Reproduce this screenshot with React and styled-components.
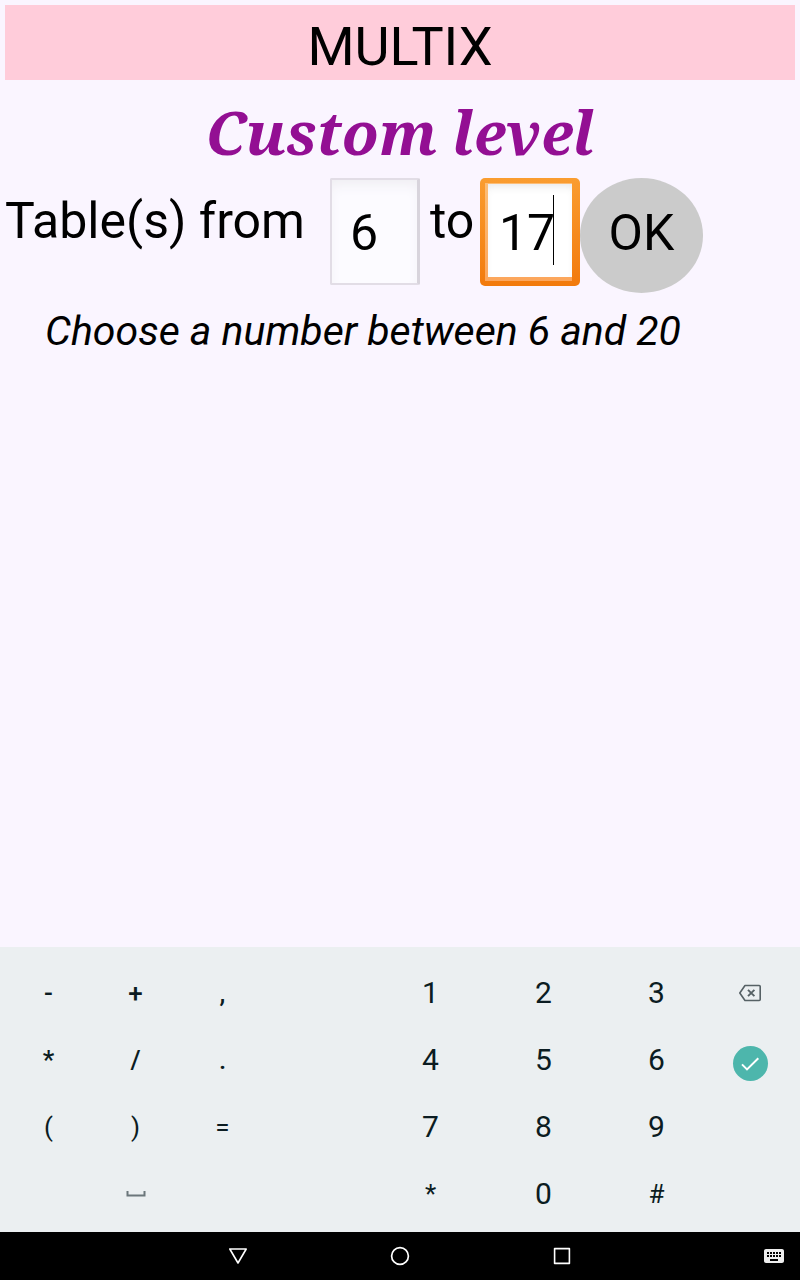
import { useState } from "react";
import styled, { createGlobalStyle } from "styled-components";

const KEY_ROWS = [
  ["-", "+", ",", null, "1", "2", "3", "delete"],
  ["*", "/", ".", null, "4", "5", "6", "done"],
  ["(", ")", "=", null, "7", "8", "9", null],
  [null, "space", null, null, "*", "0", "#", null],
];

export default function App() {
  const [from, setFrom] = useState("6");
  const [to, setTo] = useState("17");

  function handleKey(key) {
    if (key === "delete") setTo(to.slice(0, -1));
    else if (/^\d$/.test(key)) setTo(to + key);
  }

  return (
    <Screen>
      <GlobalStyle />
      <Main>
        <AppName>MULTIX</AppName>
        <Title>Custom level</Title>
        <LevelForm onSubmit={(event) => event.preventDefault()}>
          <FromLabel htmlFor="from">Table(s) from</FromLabel>
          <NumberInput
            id="from"
            inputMode="numeric"
            value={from}
            onChange={(event) => setFrom(event.target.value)}
          />
          <ToLabel htmlFor="to">to</ToLabel>
          <ActiveField>
            <ActiveInput
              id="to"
              inputMode="numeric"
              value={to}
              onChange={(event) => setTo(event.target.value)}
            />
            <Caret />
          </ActiveField>
          <OkButton type="submit">OK</OkButton>
        </LevelForm>
        <Hint>Choose a number between 6 and 20</Hint>
      </Main>

      <Keyboard>
        {KEY_ROWS.map((row, rowIndex) =>
          row.map((key, index) => {
            const id = `${rowIndex}-${index}`;
            if (!key) return <span key={id} />;
            return (
              <Key
                key={id}
                type="button"
                aria-label={key}
                $digit={/^\d$/.test(key)}
                $bold={index < 3 && rowIndex < 2}
                onClick={() => handleKey(key)}
              >
                <KeyFace name={key} />
              </Key>
            );
          })
        )}
      </Keyboard>

      <NavBar>
        <NavButton type="button" aria-label="Back">
          <svg width="24" height="24" fill="none" stroke="#fff" strokeWidth="1.6" strokeLinejoin="round">
            <path d="M3.8 5h16.4L12 19z" />
          </svg>
        </NavButton>
        <NavButton type="button" aria-label="Home">
          <svg width="24" height="24" fill="none" stroke="#fff" strokeWidth="1.7">
            <circle cx="12" cy="12" r="8.4" />
          </svg>
        </NavButton>
        <NavButton type="button" aria-label="Recent apps">
          <svg width="24" height="24" fill="none" stroke="#fff" strokeWidth="1.6" strokeLinejoin="round">
            <rect x="4.6" y="4.6" width="14.8" height="14.8" />
          </svg>
        </NavButton>
        <SwitchButton type="button" aria-label="Switch keyboard">
          <svg width="24" height="24" viewBox="0 0 24 24" fill="#eee">
            <path d="M20 5H4c-1.1 0-1.99.9-1.99 2L2 17c0 1.1.9 2 2 2h16c1.1 0 2-.9 2-2V7c0-1.1-.9-2-2-2zm-9 3h2v2h-2V8zm0 3h2v2h-2v-2zM8 8h2v2H8V8zm0 3h2v2H8v-2zm-1 2H5v-2h2v2zm0-3H5V8h2v2zm9 7H8v-2h8v2zm0-4h-2v-2h2v2zm0-3h-2V8h2v2zm3 3h-2v-2h2v2zm0-3h-2V8h2v2z" />
          </svg>
        </SwitchButton>
      </NavBar>
    </Screen>
  );
}

function KeyFace({ name }) {
  if (name === "delete") {
    return (
      <svg width="24" height="20" fill="none" stroke="#566165" strokeWidth="1.6" strokeLinejoin="round">
        <path d="M7 2.5h14.2q1 0 1 1v13q0 1-1 1H7L1.8 10z" />
        <path d="M10 6.8l6.4 6.4M16.4 6.8L10 13.2" strokeWidth="1.9" />
      </svg>
    );
  }
  if (name === "done") {
    return (
      <DoneCircle>
        <svg width="24" height="24" fill="none" stroke="#fff" strokeWidth="2">
          <path d="M4 12.4l5 5L20.3 6.2" />
        </svg>
      </DoneCircle>
    );
  }
  if (name === "space") {
    return (
      <svg width="20" height="6" fill="none" stroke="#6b767b" strokeWidth="2">
        <path d="M1.5 0v4.6h17V0" />
      </svg>
    );
  }
  return name;
}

const GlobalStyle = createGlobalStyle`
  body {
    margin: 0;
    background: #faf5ff;
  }

  * {
    box-sizing: border-box;
  }

  button {
    border: 0;
    padding: 0;
    background: none;
    font: inherit;
    color: inherit;
  }
`;

const Screen = styled.div`
  display: flex;
  flex-direction: column;
  min-height: 100vh;
  font-family: Roboto, "Liberation Sans", sans-serif;
  color: #000;
`;

const Main = styled.main`
  flex: 1;
  padding: 5px;
`;

const AppName = styled.header`
  padding: 9px 0 1px;
  background: #ffccda;
  font-size: 54px;
  line-height: 65px;
  text-align: center;
`;

const Title = styled.h1`
  margin: 11px 0 5px;
  font-family: "Noto Serif", "Liberation Serif", serif;
  font-size: 60px;
  font-style: italic;
  font-weight: 700;
  line-height: 82px;
  text-align: center;
  color: #930f93;
`;

const LevelForm = styled.form`
  display: flex;
  align-items: flex-start;
  font-size: 50px;
  line-height: 60px;
`;

const FromLabel = styled.label`
  width: 325px;
  padding-top: 13px;
`;

const ToLabel = styled.label`
  width: 60px;
  padding: 13px 0 0 10px;
`;

const NumberInput = styled.input`
  width: 90px;
  height: 107px;
  padding: 3px 18px 0;
  border: 2px solid #e2dde6;
  border-right: 3px solid #d8d4dc;
  border-radius: 2px;
  background: #fcfbff;
  box-shadow: inset 0 8px 14px -4px #eeedf1;
  font: inherit;
  color: inherit;
  outline: none;
`;

const ActiveField = styled.div`
  position: relative;
  padding: 6px 8px 9px;
  border-radius: 5px;
  background:
    linear-gradient(#fcbd76, #fca65c) 5px 5px / 87px 98px no-repeat,
    linear-gradient(#fa9d30, #f27a0c);
`;

const ActiveInput = styled(NumberInput)`
  display: block;
  width: 84px;
  height: 93px;
  padding: 5px 0 0 11px;
  border: 0;
  border-radius: 0;
  background: #fff;
  box-shadow: inset 0 6px 10px -4px #e6e6e6;
`;

const Caret = styled.span`
  position: absolute;
  top: 17px;
  left: 73px;
  width: 1px;
  height: 70px;
  background: #000;
`;

const OkButton = styled.button`
  && {
    width: 123px;
    height: 115px;
    padding-bottom: 6px;
    border-radius: 50%;
    background: #cbcbcb;
  }
`;

const Hint = styled.p`
  margin: 14px 40px 0;
  font-size: 41px;
  font-style: italic;
  line-height: 48px;
`;

const Keyboard = styled.section`
  display: grid;
  grid-template-columns: 87fr 87fr 87fr 108fr 113fr 113fr 113fr 74fr;
  grid-auto-rows: 67px;
  padding: 12px 13px 5px 5px;
  background: #ebeff1;
  color: #0b1c22;
`;

const Key = styled.button`
  && {
    display: flex;
    align-items: center;
    justify-content: center;
    font-size: ${({ $digit }) => ($digit ? "30px" : "26px")};
    font-weight: ${({ $bold }) => ($bold ? 500 : 400)};
  }
`;

const DoneCircle = styled.span`
  display: flex;
  align-items: center;
  justify-content: center;
  width: 35px;
  height: 35px;
  margin-top: 8px;
  border-radius: 50%;
  background: #4db6ac;
`;

const NavBar = styled.nav`
  display: grid;
  grid-template-columns: 157fr 162fr 162fr 162fr 131fr 26fr;
  height: 48px;
  background: #000;
`;

const NavButton = styled.button`
  display: flex;
  align-items: center;
  justify-content: center;

  &:first-child {
    grid-column: 2;
  }
`;

const SwitchButton = styled(NavButton)`
  grid-column: 5 / 7;
  justify-content: flex-end;

  svg {
    margin-right: 14px;
  }
`;
